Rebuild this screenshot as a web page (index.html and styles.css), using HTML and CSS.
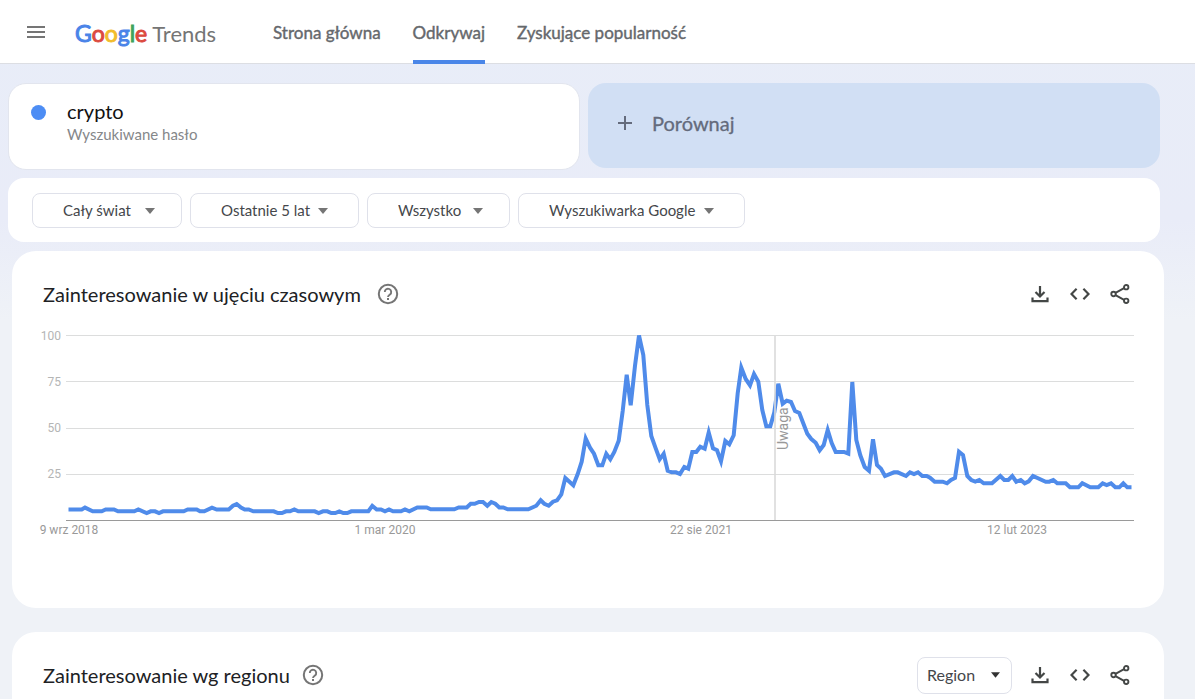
FILE: index.html
```html
<!DOCTYPE html>
<html lang="pl">
<head>
<meta charset="utf-8">
<meta name="viewport" content="width=device-width, initial-scale=1">
<title>Google Trends</title>
<link rel="stylesheet" href="styles.css">
</head>
<body>
<svg class="defs" aria-hidden="true">
  <symbol id="help" viewBox="0 0 22 22"><circle cx="11" cy="11" r="9.2" fill="none" stroke="currentColor" stroke-width="2"/><path d="M7.8 9a3.2 3.2 0 1 1 5.2 2.4c-1.300 1-2 1.500-2 2.600" fill="none" stroke="currentColor" stroke-width="1.900"/><path d="M10 15h2v2h-2z" fill="currentColor"/></symbol>
  <symbol id="download" viewBox="0 0 20 20"><path d="M10 2v10M5.500 8l4.500 4.500L14.500 8M2.500 13.500v3.700h15v-3.700" fill="none" stroke="currentColor" stroke-width="2.200"/></symbol>
  <symbol id="embed" viewBox="0 0 20 20"><path d="M6.600 4.800L1.500 10l5.100 5.200M13.400 4.800l5.100 5.200-5.100 5.200" fill="none" stroke="currentColor" stroke-width="2.200"/></symbol>
  <symbol id="share" viewBox="0 0 20 20"><g fill="none" stroke="currentColor" stroke-width="1.900"><path d="M5.500 8.900l9-5M5.500 11.100l9 5"/><circle cx="3.500" cy="10" r="2.200"/><circle cx="16.200" cy="3.200" r="2.200"/><circle cx="16.200" cy="16.800" r="2.200"/></g></symbol>
  <symbol id="caret" viewBox="0 0 10 6"><path d="M0 0h10L5 6z" fill="currentColor"/></symbol>
</svg>

<header class="topbar">
  <button class="menu" type="button" aria-label="Menu">
    <svg viewBox="0 0 18 12" width="18" height="12"><path d="M0 1h18M0 6h18M0 11h18" stroke="#757575" stroke-width="2"/></svg>
  </button>
  <a class="logo" href="#"><span class="brand"><span class="blue">G</span><span class="red">o</span><span class="yellow">o</span><span class="blue">g</span><span class="green">l</span><span class="red">e</span></span><span>Trends</span></a>
  <nav class="nav">
    <a href="#">Strona główna</a>
    <a class="active" href="#" aria-current="page">Odkrywaj</a>
    <a href="#">Zyskujące popularność</a>
  </nav>
</header>

<main class="page">
  <div class="terms">
    <section class="term">
      <span class="dot"></span>
      <div>
        <h1 class="term-name">crypto</h1>
        <p class="term-type">Wyszukiwane hasło</p>
      </div>
    </section>
    <button class="compare" type="button">
      <svg viewBox="0 0 14 14" width="14" height="14"><path d="M7 0v14M0 7h14" stroke="currentColor" stroke-width="2"/></svg>
      Porównaj
    </button>
  </div>

  <form class="filters">
    <div class="filter place"><select aria-label="Lokalizacja"><option>Cały świat</option></select><svg class="caret"><use href="#caret"/></svg></div>
    <div class="filter time"><select aria-label="Okres"><option>Ostatnie 5 lat</option></select><svg class="caret"><use href="#caret"/></svg></div>
    <div class="filter category"><select aria-label="Kategoria"><option>Wszystko</option></select><svg class="caret"><use href="#caret"/></svg></div>
    <div class="filter source"><select aria-label="Usługa"><option>Wyszukiwarka Google</option></select><svg class="caret"><use href="#caret"/></svg></div>
  </form>

  <section class="card">
    <div class="card-head">
      <h2>Zainteresowanie w ujęciu czasowym</h2>
      <button class="icon help" type="button" aria-label="Pomoc"><svg><use href="#help"/></svg></button>
      <div class="actions">
        <button class="icon" type="button" aria-label="Pobierz"><svg><use href="#download"/></svg></button>
        <button class="icon" type="button" aria-label="Umieść"><svg><use href="#embed"/></svg></button>
        <button class="icon" type="button" aria-label="Udostępnij"><svg><use href="#share"/></svg></button>
      </div>
    </div>
    <svg class="chart" viewBox="38 325 1100 220" role="img" aria-label="Zainteresowanie hasłem crypto">
      <path class="grid" d="M66 335.500H1134M66 381.500H1134M66 428.500H1134M66 474.500H1134"/>
      <path class="axis" d="M66 520.500H1134"/>
      <g class="scale"><text x="61" y="340">100</text><text x="61" y="386">75</text><text x="61" y="432">50</text><text x="61" y="478">25</text></g>
      <g class="dates"><text x="69" y="534">9 wrz 2018</text><text x="385" y="534">1 mar 2020</text><text x="701" y="534">22 sie 2021</text><text x="1017" y="534">12 lut 2023</text></g>
      <polyline class="line" points="68.500,509.500 81.700,509.500 85,507.600 92.700,511.300 101.700,511.300 105.700,509.500 114,509.500 118,511.300 134.300,511.300 138.300,509.500 146.700,513 150.700,511.300 155,511.300 159,513 163,511.300 183.700,511.300 187.700,509.500 196.700,509.500 200,511.300 204.300,511.300 212,507.600 216.700,509.500 228.700,509.500 233,505.800 236.700,504 241,507.600 244.700,509.500 248.700,509.500 253.300,511.300 273.700,511.300 278,513 282,513 286,511.300 290,511.300 294.300,509.500 298.300,511.300 314.700,511.300 318.700,513 323,511.300 327.300,511.300 331.300,513 335.300,513 339.300,511.300 343.300,513 347.300,513 351.300,511.300 368.300,511.300 372.300,505.800 376.700,509.500 381,509.500 385,511.300 389,509.500 393,511.300 401,511.300 405,509.500 409.300,511.300 417.300,507.500 426.700,507.500 430.700,509.300 454.300,509.300 458.700,507.500 466.700,507.500 470.700,503.800 474.700,503.800 479,502 483,502 487.300,505.700 491.300,502 495.300,503.700 499.300,507.400 503.300,507.400 507.700,509.300 528.300,509.300 536.300,505.700 540.700,500.300 544.300,503.700 548.700,505.700 553,501.700 557,500.300 561.300,494.300 565.300,478 573.300,485.300 577.700,474 581.700,461.700 585.700,438.500 590,447.700 594,453.700 598.300,465.300 602.300,465.300 606.300,453.700 610.300,459.300 614.300,452 618.700,440.700 622.700,411 626.700,374.700 630.700,405.300 635,365.700 639,335.500 643.300,355 647.300,405 651.300,436 655.700,448.300 659.700,459.300 663.700,453.700 667.700,470.700 671.700,472.300 676,472.300 680,474 684.300,467 688.300,468.700 692.300,452 696.300,452 700.300,446.700 704.700,448.700 708.700,432.500 713,448.300 717,450.300 721,461.300 725.300,441 729.300,444.300 733.700,435.300 737.700,393.300 741.300,367.700 745.700,379 750,385.300 754,374 758.300,381.700 762.300,410 766.300,426.300 770.300,426.300 774.300,412.300 778.300,383.700 782.700,403.700 786.700,400.700 791,402 795,411 799.300,413 807.300,433.700 811.300,439 815.700,442.700 819.700,450.300 823.700,445 827.700,430 831.700,443 835.700,452 844,452 848.300,453.700 852.300,382 856.300,440 860.300,455.300 864.700,467 869,470.700 873,439.300 877,465 881,468.700 885,476 894,472.300 897.700,472.300 906,476 910,472.300 914,474 918,472.300 922.300,476 926.700,476 930,477.700 934.700,481.700 942.700,481.700 947,483.300 951,480 955,478 959,451.700 963,455 967.300,476 971.300,480 975.300,481.700 979.300,480 983.700,483.300 992,483.300 1000.300,476 1004.300,480 1008.300,480 1012.300,476 1016.300,481.700 1020.700,480 1024.700,483.300 1028.700,481.300 1033,476 1045.700,481.700 1049.300,481.700 1053.300,480 1057.300,483.300 1065.700,483.300 1070,487.300 1078.300,487.300 1082.300,483.300 1090.300,487.300 1098.300,487.300 1102.700,483.300 1106.700,485 1111,483.300 1115.300,487.300 1119.300,487.300 1123.300,483.300 1127.300,487.300 1131.500,487.300"/>
      <path class="note" d="M775 336V520"/>
      <text class="note-label" transform="translate(788 450) rotate(-90)">Uwaga</text>
    </svg>
  </section>

  <section class="card">
    <div class="card-head">
      <h2>Zainteresowanie wg regionu</h2>
      <button class="icon help near" type="button" aria-label="Pomoc"><svg><use href="#help"/></svg></button>
      <div class="actions">
        <div class="filter region"><select aria-label="Podział"><option>Region</option></select><svg class="caret"><use href="#caret"/></svg></div>
        <button class="icon" type="button" aria-label="Pobierz"><svg><use href="#download"/></svg></button>
        <button class="icon" type="button" aria-label="Umieść"><svg><use href="#embed"/></svg></button>
        <button class="icon" type="button" aria-label="Udostępnij"><svg><use href="#share"/></svg></button>
      </div>
    </div>
  </section>
</main>
</body>
</html>
```
FILE: styles.css
```css
* { box-sizing: border-box; }
body {
  margin: 0;
  min-height: 100vh;
  font-family: Lato, "Open Sans", sans-serif;
  color: #202124;
  background: linear-gradient(#e8edf8 0, #e9ecf8 220px, #eff2f7 320px, #eff2f7 100%);
}
h1, h2, p { margin: 0; font-weight: 400; }
button, select { font: inherit; color: inherit; background: none; border: 0; padding: 0; margin: 0; }
a { color: inherit; text-decoration: none; }
.defs { display: none; }

.topbar {
  display: flex;
  align-items: stretch;
  height: 64px;
  padding-left: 27px;
  background: #fff;
  border-bottom: 1px solid #dcdee3;
}
.menu { display: flex; align-items: center; width: 48px; }
.logo { display: flex; align-items: baseline; gap: 5px; width: 198px; padding-top: 19px; font-size: 22px; color: #757575; }
.brand { font-size: 23px; -webkit-text-stroke: 1px; }
.blue { color: #4a84e8; }
.red { color: #dc4a3f; }
.yellow { color: #f2bc2c; }
.green { color: #3fa45b; }
.nav { display: flex; gap: 32px; font-size: 17px; color: #65686c; -webkit-text-stroke: 0.4px; }
.nav a { display: flex; align-items: center; padding-top: 4px; margin-bottom: -1px; border-bottom: 4px solid transparent; }
.nav .active { background: linear-gradient(#4a86e8, #4a86e8) bottom / 100% 4px no-repeat border-box; border-radius: 3px 3px 0 0; }

.page { padding: 19px 35px 0 8px; }
.terms { display: grid; grid-template-columns: 1fr 1fr; gap: 8px; }
.term {
  display: flex;
  gap: 21px;
  height: 87px;
  padding: 16px 22px;
  background: #fff;
  border: 1px solid #e2e5ee;
  border-radius: 18px;
}
.dot { width: 15px; height: 15px; margin-top: 5px; border-radius: 50%; background: #4d8df4; }
.term-name { font-size: 20px; line-height: 22px; color: #111; }
.term-type { font-size: 15px; line-height: 24px; color: #85878a; }
.compare {
  display: flex;
  align-items: center;
  gap: 20px;
  height: 85px;
  padding: 0 30px 6px;
  border-radius: 18px;
  background: #d1dff4;
  color: #646b7c;
  font-size: 20px;
  -webkit-text-stroke: 0.3px;
}

.filters {
  display: flex;
  gap: 8px;
  margin-top: 8px;
  padding: 15px 24px 14px;
  background: #fff;
  border-radius: 16px;
}
.filter { position: relative; height: 35px; color: #45474b; font-size: 15px; }
.filter select {
  appearance: none;
  width: 100%;
  height: 100%;
  padding: 0 30px 2px;
  border: 1px solid #dfe1ea;
  border-radius: 8px;
}
.caret { position: absolute; right: 27px; top: 15px; width: 10px; height: 6px; color: #757575; pointer-events: none; }
.place { width: 150px; }
.time { width: 169px; }
.category { width: 143px; }
.source { width: 227px; }
.time .caret, .source .caret { right: 31px; }

.card {
  margin: 9px -4px 24px 4px;
  padding: 24px 26px 63px;
  border-radius: 24px;
  background: #fff;
}
.card-head { display: flex; align-items: center; height: 38px; padding: 0 8px 0 5px; }
.card-head h2 { font-size: 20px; line-height: 28px; }
.icon { display: flex; width: 20px; height: 20px; color: #444746; }
.icon svg { width: 100%; height: 100%; }
.help { width: 22px; height: 22px; margin-left: 16px; color: #757575; }
.near { margin-left: 12px; }
.actions { display: flex; align-items: center; gap: 20px; margin-left: auto; }
.region { width: 95px; height: 37px; margin-right: -2px; font-size: 16px; }
.region select { padding: 0 9px 2px; }
.region .caret { right: 12px; top: 15px; width: 9px; color: #333; }

.chart { display: block; width: 100%; height: auto; margin-top: 12px; font-family: Roboto, sans-serif; font-size: 12px; }
.grid { stroke: #dcdddd; }
.axis { stroke: #9a9a9a; }
.scale { fill: #b4b5b5; text-anchor: end; }
.dates { fill: #999; text-anchor: middle; }
.line { fill: none; stroke: #4f8bea; stroke-width: 4; }
.note { stroke: #d9d9d9; stroke-opacity: .8; stroke-width: 2; }
.note-label { font-size: 14px; fill: #999; }
```
